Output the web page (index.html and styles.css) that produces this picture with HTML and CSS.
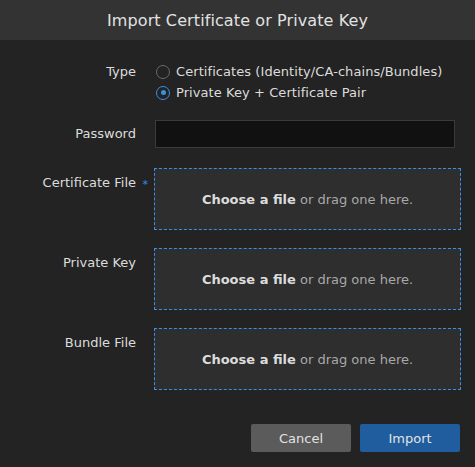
FILE: index.html
```html
<!DOCTYPE html>
<html>
<head>
<meta charset="utf-8">
<link rel="stylesheet" href="styles.css">
</head>
<body>
<div class="dialog">
  <div class="header">Import Certificate or Private Key</div>
  <div class="form">
    <div class="label">Type</div>
    <div class="radios">
      <label class="radio"><span class="dot"></span>Certificates (Identity/CA-chains/Bundles)</label>
      <label class="radio"><span class="dot checked"></span>Private Key + Certificate Pair</label>
    </div>

    <div class="label mid">Password</div>
    <div class="pw"><div class="input"></div></div>

    <div class="label top req">Certificate File</div>
    <div class="drop"><b>Choose a file</b>&nbsp;or drag one here.</div>

    <div class="label top">Private Key</div>
    <div class="drop"><b>Choose a file</b>&nbsp;or drag one here.</div>

    <div class="label top">Bundle File</div>
    <div class="drop"><b>Choose a file</b>&nbsp;or drag one here.</div>
  </div>
  <div class="footer">
    <div class="btn cancel">Cancel</div>
    <div class="btn primary">Import</div>
  </div>
</div>
</body>
</html>
```
FILE: styles.css
```css
html, body {
  margin: 0;
  padding: 0;
  background: #232323;
}
body {
  font-family: "DejaVu Sans", Verdana, sans-serif;
  font-size: 13px;
  color: #dcdcdc;
}
.dialog {
  width: 475px;
  height: 467px;
  background: #232323;
}
.header {
  height: 40px;
  background: #333333;
  color: #e2e2e2;
  font-size: 16px;
  letter-spacing: 0.1px;
  display: flex;
  align-items: center;
  justify-content: center;
}
.form {
  display: grid;
  grid-template-columns: 136px 1fr;
  column-gap: 18px;
  row-gap: 18px;
  padding: 21px 14px 0 0;
}
.label {
  text-align: right;
  line-height: 21px;
  position: relative;
}
.label.mid {
  align-self: center;
  line-height: 16px;
  margin-bottom: 2px;
}
.label.top {
  padding-top: 7px;
  line-height: 16px;
}
.label.req::after {
  content: "*";
  position: absolute;
  right: -12px;
  top: 9px;
  color: #3b8fe0;
  font-size: 11px;
}
.radios {
  display: flex;
  flex-direction: column;
  margin-bottom: -1px;
  letter-spacing: 0.07px;
}
.radio {
  display: flex;
  align-items: center;
  line-height: 21px;
  gap: 6px;
}
.dot {
  width: 12px;
  height: 12px;
  border: 1px solid #6a6a6a;
  border-radius: 50%;
  margin-left: 2px;
  display: flex;
  align-items: center;
  justify-content: center;
}
.dot.checked {
  border-color: #3b8fe0;
}
.dot.checked::after {
  content: "";
  width: 5px;
  height: 5px;
  border-radius: 50%;
  background: #3b8fe0;
}
.pw {
  padding-bottom: 2px;
}
.input {
  width: 300px;
  height: 28px;
  box-sizing: border-box;
  margin-left: 1px;
  background: #111111;
  border: 1px solid #3a3a3a;
}
.drop {
  height: 62px;
  box-sizing: border-box;
  border: 1px dashed #3b8fe0;
  background: #2e2e2e;
  display: flex;
  align-items: center;
  justify-content: center;
  color: #a8a8a8;
}
.drop b {
  color: #dcdcdc;
}
.footer {
  display: flex;
  justify-content: flex-end;
  gap: 9px;
  padding: 34px 15px 0 0;
}
.btn {
  width: 100px;
  height: 28px;
  border-radius: 2px;
  display: flex;
  align-items: center;
  justify-content: center;
  color: #e2e2e2;
}
.cancel {
  background: #5b5b5b;
}
.primary {
  background: #1f5d9f;
}
```
